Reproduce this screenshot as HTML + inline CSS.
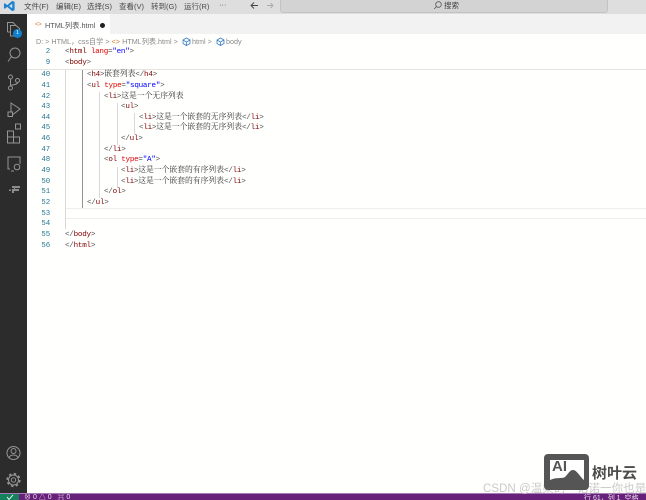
<!DOCTYPE html>
<html lang="zh">
<head>
<meta charset="utf-8">
<style>
html,body{margin:0;padding:0;background:#fff}
#r{position:relative;width:646px;height:500px;overflow:hidden;background:#fffffe;font-family:"Liberation Sans","Noto Sans CJK SC",sans-serif}
#r div,#r span.a,#r svg{position:absolute}
.soft{filter:blur(.35px)}
.menu{top:1px;font-size:7.5px;line-height:11px;color:#484848;white-space:nowrap}
.num{left:27px;width:23px;text-align:right;font:7.4px/11px "Liberation Mono",monospace;color:#237893;white-space:nowrap;letter-spacing:-.14px}
.l{left:65px;font:7.6px/11px "Liberation Mono","Noto Serif CJK SC",monospace;letter-spacing:-.26px;color:#800000;white-space:pre}
.l i{font-style:normal;color:#555}
.l b{font-weight:normal;color:#e50000}
.l u{text-decoration:none;color:#0000ff}
.l em{font-style:normal;font-family:"Noto Serif CJK SC",serif;font-size:7.8px;line-height:0;letter-spacing:0;color:#333}
.g{width:1px;background:#d8d8d8}
.g2{width:1px;background:#939393}
</style>
</head>
<body>
<div id="r">
<div class="soft" style="left:0;top:0;width:646px;height:500px">
  <!-- title bar -->
  <div style="left:0;top:0;width:646px;height:14px;background:#dedede"></div>
  <svg style="left:3px;top:0" width="13" height="12" viewBox="0 0 14 13"><path d="M10 1 L12.500 2 V11 L10 12 L4.500 7.500 L2 9.500 L1 9 V4 L2 3.500 L4.500 5.500 Z M10 4 L6.500 6.500 L10 9 Z" fill="#1a82d0" fill-rule="evenodd"/></svg>
  <div class="menu" style="left:24px">文件(F)</div>
  <div class="menu" style="left:56px">编辑(E)</div>
  <div class="menu" style="left:87px">选择(S)</div>
  <div class="menu" style="left:119px">查看(V)</div>
  <div class="menu" style="left:151px">转到(G)</div>
  <div class="menu" style="left:184px">运行(R)</div>
  <div class="menu" style="left:219px;top:-1px">···</div>
  <svg style="left:249px;top:1px" width="26" height="9" viewBox="0 0 26 9"><path d="M9 4.500H2M5 1.500L2 4.500L5 7.500" fill="none" stroke="#444" stroke-width=".9"/><path d="M18 4.500H24M21.500 2L24 4.500L21.500 7" fill="none" stroke="#aaa" stroke-width=".9"/></svg>
  <div style="left:280px;top:-3px;width:328px;height:16px;background:#d3d3d3;border:1px solid #c2c2c2;border-radius:3px;box-sizing:border-box"></div>
  <svg style="left:433px;top:1px" width="10" height="9" viewBox="0 0 10 9"><circle cx="5.500" cy="3.500" r="2.800" fill="none" stroke="#555" stroke-width=".8"/><path d="M3.500 5.500L1.200 8" stroke="#555" stroke-width=".8"/></svg>
  <div class="menu" style="left:444px;top:0;font-size:7.500px;color:#444">搜索</div>

  <!-- activity bar -->
  <div style="left:0;top:14px;width:27px;height:480px;background:#2c2c2c"></div>
  <svg style="left:0;top:14px" width="27" height="480" viewBox="0 0 27 480" fill="none" stroke="#959595" stroke-width="1">
    <path d="M7.500 18V8.500H13L15.500 11M7.500 18H10.500M10.500 11.500H16L19.500 14.500V22H10.500Z"/>
    <circle cx="15" cy="39" r="5"/><path d="M11.500 42.500L8 47.500"/>
    <circle cx="10.500" cy="63" r="2"/><circle cx="10.500" cy="74" r="2"/><circle cx="17.500" cy="66.500" r="2"/>
    <path d="M10.500 65V72M17.500 68.500C17.500 71.500 11 70 10.500 72"/>
    <path d="M11 89L20 95L11 102Z"/><rect x="8" y="98" width="4.500" height="4.500" fill="#2c2c2c"/>
    <rect x="7.500" y="117" width="6" height="6"/><rect x="13.500" y="123" width="6" height="6"/><rect x="7.500" y="123" width="6" height="6"/><rect x="15.500" y="110" width="5" height="5"/>
    <path d="M10 155H8V143H20V150M11 157H14"/><circle cx="17" cy="153" r="2.800"/>
    <circle cx="13.500" cy="439" r="6.500"/><circle cx="13.500" cy="437" r="2.500"/><path d="M9 444C10 440 17 440 18 444"/>
    <circle cx="13.500" cy="466" r="2.200"/>
    <circle cx="13.500" cy="466" r="5"/>
    <circle cx="13.500" cy="466" r="6.300" stroke-width="1.600" stroke-dasharray="2.500 2.450"/>
  </svg>
  <svg style="left:8px;top:183px" width="13" height="11" viewBox="0 0 13 11"><path d="M4 3H12V5H7V6H11V8H6V10H4V6H6V5H4Z" fill="#8d8d8d"/><rect x="1" y="6.500" width="2" height="1.500" fill="#8d8d8d"/></svg>
  <div style="left:13px;top:29px;width:9px;height:9px;border-radius:50%;background:#0f7fd0;color:#fff;font-size:5px;line-height:9px;text-align:center">1</div>

  <!-- tabs -->
  <div style="left:27px;top:14px;width:619px;height:20px;background:#f2f2f2"></div>
  <div style="left:27px;top:14px;width:83px;height:20px;background:#fff"></div>
  <div style="left:35px;top:20px;font:6px/10px 'Liberation Mono',monospace;letter-spacing:-.5px;color:#d0772c">&lt;&gt;</div>
  <div style="left:45px;top:20px;font-size:7.300px;line-height:11px;color:#555;white-space:nowrap">HTML列表.html</div>
  <div style="left:100px;top:23px;width:5px;height:5px;border-radius:50%;background:#222"></div>

  <!-- breadcrumb -->
  <div style="left:36px;top:36px;font-size:7.200px;line-height:11px;color:#8a8a8a;white-space:nowrap">D: &gt; HTML，css自学 &gt; <span style="color:#d0772c;font-family:'Liberation Mono',monospace">&lt;&gt;</span> HTML列表.html &gt;</div>
  <svg style="left:182px;top:37px" width="9" height="9" viewBox="0 0 9 9"><path d="M4.500 1L8 3V6.500L4.500 8.500L1 6.500V3ZM1 3L4.500 5L8 3M4.500 5V8.500" fill="none" stroke="#3b7fc4" stroke-width=".8"/></svg>
  <div style="left:192px;top:36px;font-size:7.200px;line-height:11px;color:#8a8a8a;white-space:nowrap">html &gt;</div>
  <svg style="left:216px;top:37px" width="9" height="9" viewBox="0 0 9 9"><path d="M4.500 1L8 3V6.500L4.500 8.500L1 6.500V3ZM1 3L4.500 5L8 3M4.500 5V8.500" fill="none" stroke="#3b7fc4" stroke-width=".8"/></svg>
  <div style="left:226px;top:36px;font-size:7.200px;line-height:11px;color:#8a8a8a">body</div>

  <!-- sticky separator -->
  <div style="left:27px;top:69px;width:619px;height:1px;background:#e6e3df"></div>

  <!-- indent guides -->
  <div class="g" style="left:65px;top:70px;height:159px"></div>
  <div class="g2" style="left:82px;top:70px;height:138px"></div>
  <div class="g" style="left:99px;top:92px;height:106px"></div>
  <div class="g" style="left:117px;top:103px;height:42px"></div>
  <div class="g" style="left:117px;top:167px;height:21px"></div>
  <div class="g" style="left:134px;top:113px;height:21px"></div>

  <!-- current line highlight -->
  <div style="left:66px;top:208px;width:580px;height:1px;background:#eeeeee"></div>
  <div style="left:66px;top:218px;width:580px;height:1px;background:#eeeeee"></div>

  <!-- gutter -->
  <div class="num" style="top:47px">2</div>
  <div class="num" style="top:58px">9</div>
  <div class="num" style="top:70px">40</div>
  <div class="num" style="top:81px">41</div>
  <div class="num" style="top:92px">42</div>
  <div class="num" style="top:102px">43</div>
  <div class="num" style="top:113px">44</div>
  <div class="num" style="top:123px">45</div>
  <div class="num" style="top:134px">46</div>
  <div class="num" style="top:145px">47</div>
  <div class="num" style="top:155px">48</div>
  <div class="num" style="top:166px">49</div>
  <div class="num" style="top:177px">50</div>
  <div class="num" style="top:187px">51</div>
  <div class="num" style="top:198px">52</div>
  <div class="num" style="top:209px">53</div>
  <div class="num" style="top:219px">54</div>
  <div class="num" style="top:230px">55</div>
  <div class="num" style="top:241px">56</div>

  <!-- code -->
  <div class="l" style="top:47px"><i>&lt;</i>html <b>lang</b><i>=</i><u>"en"</u><i>&gt;</i></div>
  <div class="l" style="top:58px"><i>&lt;</i>body<i>&gt;</i></div>
  <div class="l" style="left:87px;top:70px"><i>&lt;</i>h4<i>&gt;</i><em>嵌套列表</em><i>&lt;/</i>h4<i>&gt;</i></div>
  <div class="l" style="left:87px;top:81px"><i>&lt;</i>ul <b>type</b><i>=</i><u>"square"</u><i>&gt;</i></div>
  <div class="l" style="left:104px;top:92px"><i>&lt;</i>li<i>&gt;</i><em>这是一个无序列表</em></div>
  <div class="l" style="left:121px;top:102px"><i>&lt;</i>ul<i>&gt;</i></div>
  <div class="l" style="left:139px;top:113px"><i>&lt;</i>li<i>&gt;</i><em>这是一个嵌套的无序列表</em><i>&lt;/</i>li<i>&gt;</i></div>
  <div class="l" style="left:139px;top:123px"><i>&lt;</i>li<i>&gt;</i><em>这是一个嵌套的无序列表</em><i>&lt;/</i>li<i>&gt;</i></div>
  <div class="l" style="left:121px;top:134px"><i>&lt;/</i>ul<i>&gt;</i></div>
  <div class="l" style="left:104px;top:145px"><i>&lt;/</i>li<i>&gt;</i></div>
  <div class="l" style="left:104px;top:155px"><i>&lt;</i>ol <b>type</b><i>=</i><u>"A"</u><i>&gt;</i></div>
  <div class="l" style="left:121px;top:166px"><i>&lt;</i>li<i>&gt;</i><em>这是一个嵌套的有序列表</em><i>&lt;/</i>li<i>&gt;</i></div>
  <div class="l" style="left:121px;top:177px"><i>&lt;</i>li<i>&gt;</i><em>这是一个嵌套的有序列表</em><i>&lt;/</i>li<i>&gt;</i></div>
  <div class="l" style="left:104px;top:187px"><i>&lt;/</i>ol<i>&gt;</i></div>
  <div class="l" style="left:87px;top:198px"><i>&lt;/</i>ul<i>&gt;</i></div>
  <div class="l" style="top:230px"><i>&lt;/</i>body<i>&gt;</i></div>
  <div class="l" style="top:241px"><i>&lt;/</i>html<i>&gt;</i></div>

  <!-- status bar -->
  <div style="left:0;top:493px;width:646px;height:1px;background:#a77bb5"></div>
  <div style="left:0;top:494px;width:646px;height:6px;background:#68217a"></div>
  <div style="left:0;top:494px;width:19px;height:6px;background:#16825d"></div>
  <svg style="left:6px;top:494px" width="8" height="6" viewBox="0 0 8 6"><path d="M1 3L3 5.500L7 1" fill="none" stroke="#fff" stroke-width=".9"/></svg>
  <div style="left:24px;top:494px;width:60px;height:6px;overflow:hidden"><span style="display:block;margin-top:-1px;font-size:7px;line-height:9px;color:#e8dcec;white-space:nowrap">⊗ 0 △ 0 &nbsp;&nbsp;⌘ 0</span></div>
  <div style="left:584px;top:494px;width:62px;height:6px;overflow:hidden"><span style="display:block;font-size:7px;line-height:9px;color:#e8dcec;white-space:nowrap">行 61，列 1 &nbsp;空格</span></div>

  <!-- watermark -->
  <div style="left:483px;top:482px;font-size:11.500px;line-height:14px;color:#cacaca;white-space:nowrap;letter-spacing:.05px">CSDN @温柔的一诺诺一你也是</div>
  <div style="left:544px;top:454px;width:45px;height:36px;background:#555;border-radius:4px"></div>
  <div style="left:550px;top:460px;width:34px;height:25px;background:#fff"></div>
  <svg style="left:550px;top:460px" width="34" height="25" viewBox="0 0 34 25"><path d="M0 25V20C6 17 12 19 15 17C18 14 20 10 23 10C27 10 30 17 34 20V25Z" fill="#555"/></svg>
  <div style="left:552px;top:458px;font-size:15px;line-height:17px;font-weight:bold;color:#555;letter-spacing:0">AI</div>
  <div style="left:592px;top:465px;font-size:15px;line-height:18px;font-weight:bold;color:#4c4c4c;white-space:nowrap">树叶云</div>
</div>
</div>
</body>
</html>
